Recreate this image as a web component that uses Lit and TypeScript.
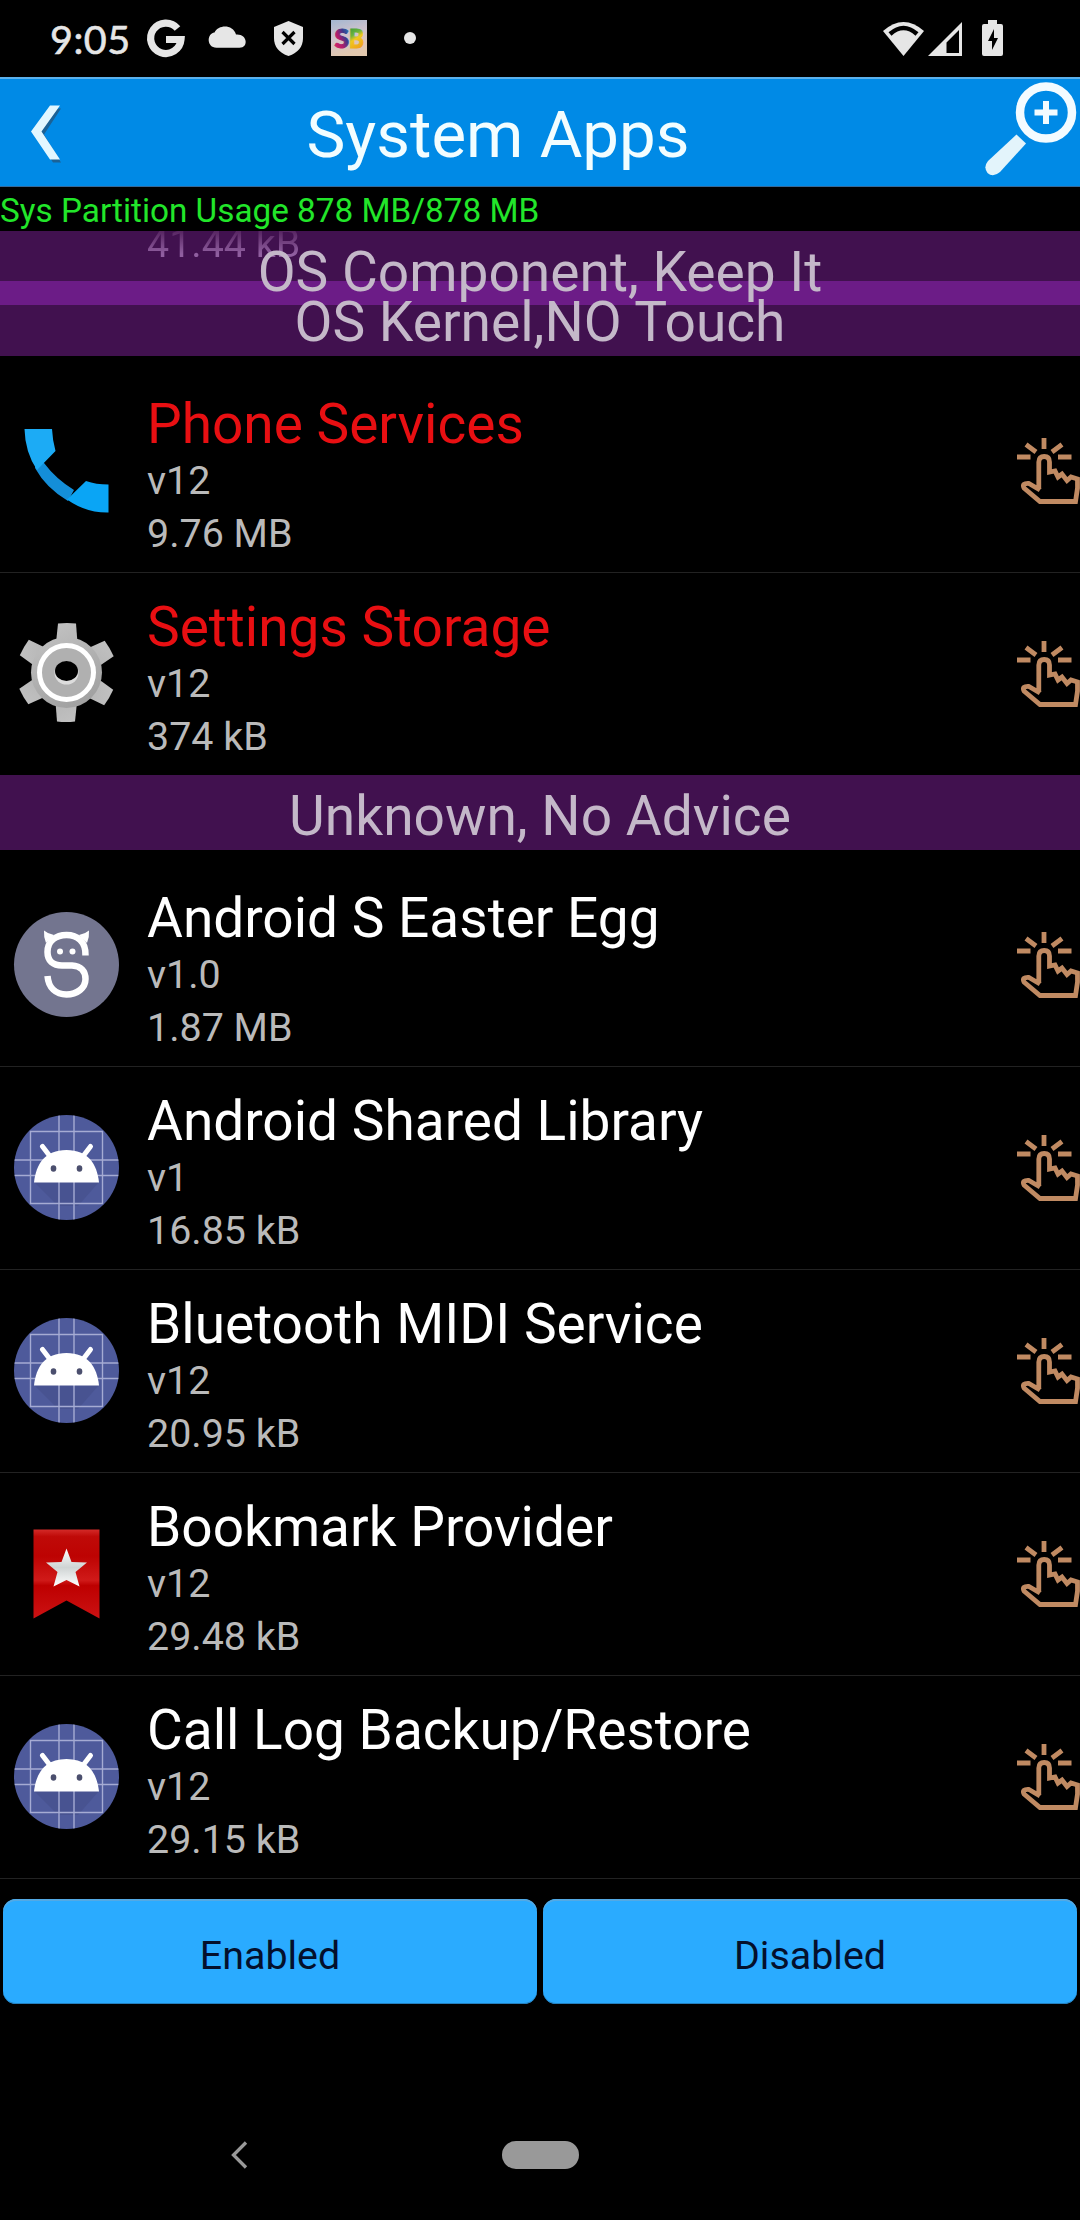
import { LitElement, html, css, svg } from "lit";
import { customElement, property } from "lit/decorators.js";

type IconName = "phone" | "gear" | "egg" | "droid" | "bookmark";

interface AppEntry {
  name: string;
  version: string;
  size: string;
  icon: IconName;
  core?: boolean;
  last?: boolean;
}

const SYSTEM_APPS: AppEntry[] = [
  { name: "Phone Services", version: "v12", size: "9.76 MB", icon: "phone", core: true },
  { name: "Settings Storage", version: "v12", size: "374 kB", icon: "gear", core: true, last: true },
];

const UNKNOWN_APPS: AppEntry[] = [
  { name: "Android S Easter Egg", version: "v1.0", size: "1.87 MB", icon: "egg" },
  { name: "Android Shared Library", version: "v1", size: "16.85 kB", icon: "droid" },
  { name: "Bluetooth MIDI Service", version: "v12", size: "20.95 kB", icon: "droid" },
  { name: "Bookmark Provider", version: "v12", size: "29.48 kB", icon: "bookmark" },
  { name: "Call Log Backup/Restore", version: "v12", size: "29.15 kB", icon: "droid" },
];

const tooth = (angle: number) => svg`
  <path transform="rotate(${angle} 66.5 67.5)" d="M58 18.500 Q67 17.500 76 18.500 L77.500 38 H56 Z"/>`;

const icons: Record<IconName, () => unknown> = {
  phone: () => svg`
    <path fill="#148ed8" d="M35 59 L44 61 Q56 77 74 88 L68 99 Q46 86 35 66Z"/>
    <path fill="#1cabf5" d="M24.500 27 H52 Q52.500 38 55.500 49 L37 68 Q25 50 24.500 27Z"/>
    <path fill="#0aa5f5" d="M67 97.500 L86 79 Q96 82.500 108.500 82.500 V110.500 Q86 111 67 97.500Z"/>`,
  gear: () => svg`
    <defs>
      <linearGradient id="metal" gradientUnits="userSpaceOnUse" x1="40" y1="18" x2="90" y2="117">
        <stop offset="0" stop-color="#c4c4c4"/><stop offset="1" stop-color="#999"/>
      </linearGradient>
    </defs>
    <g fill="url(#metal)">
      ${[0, 60, 120, 180, 240, 300].map(tooth)}
      <circle cx="66.500" cy="67.500" r="35.500"/>
    </g>
    <circle cx="66.500" cy="67.500" r="27" fill="#b0b0b0" stroke="#fff" stroke-width="5"/>
    <ellipse cx="66.500" cy="68" rx="12" ry="11.500" fill="#ddd"/>
    <ellipse cx="66.500" cy="66" rx="11.500" ry="10" fill="#000"/>`,
  egg: () => svg`
    <circle cx="66.500" cy="68.500" r="52.500" fill="#73758f"/>
    <g fill="none" stroke="#fff" stroke-width="6.500">
      <path d="M85.500 59.500 C86 45 77 39 66.500 39 C56 39 47.500 45 47.500 56 C47.500 65 53 69.500 62 69.500 H72 C81 70 85.500 75 85.500 83 C85.500 92 77 98.500 66.500 98.500 C56 98.500 48.500 92 47.500 80"/>
    </g>
    <path d="M44 34.500 Q48 38 54 39 L46 47 Q43.500 41 44 34.500Z M89 34.500 Q85 38 79 39 L87 47 Q89.500 41 89 34.500Z" fill="#fff"/>
    <circle cx="60" cy="55.500" r="3" fill="#fff"/><circle cx="72.500" cy="55.500" r="3" fill="#fff"/>`,
  droid: () => svg`
    <defs><clipPath id="disc"><circle cx="66.500" cy="68.500" r="52.500"/></clipPath></defs>
    <g clip-path="url(#disc)">
      <rect width="133" height="133" fill="#4e5a9b"/>
      <path d="M34 83 L58 107 H78 L99 83Z" fill="#485391"/>
      <path d="M59 10V125 M74 10V125 M10 61H123 M10 76.500H123 M30.500 32.500H102.500V104.500H30.500Z"
        fill="none" stroke="#a5abd3" stroke-width="1.400"/>
    </g>
    <path d="M34 83.500 C36 65 45 51 66.500 51 C88 51 97 65 99 83.500Z" fill="#fff"/>
    <path d="M42.500 47.500 L49 56 M90.500 47.500 L84 56" stroke="#fff" stroke-width="5" stroke-linecap="round"/>
    <ellipse cx="53.500" cy="69.500" rx="2.800" ry="3.300" fill="#4b4f6e"/>
    <ellipse cx="79.500" cy="69.500" rx="2.800" ry="3.300" fill="#4b4f6e"/>`,
  bookmark: () => svg`
    <defs>
      <linearGradient id="ribbon" x1="0" y1="0" x2="0" y2="1">
        <stop offset="0" stop-color="#d42a28"/><stop offset=".08" stop-color="#bf0a08"/>
        <stop offset=".3" stop-color="#bd0302"/><stop offset=".57" stop-color="#d01a19"/>
        <stop offset=".63" stop-color="#bd0000"/><stop offset="1" stop-color="#cc1213"/>
      </linearGradient>
      <linearGradient id="silver" x1="0" y1="0" x2="0" y2="1">
        <stop offset="0" stop-color="#fff"/><stop offset=".5" stop-color="#cfd4d4"/>
        <stop offset="1" stop-color="#fff"/>
      </linearGradient>
    </defs>
    <g transform="translate(0 2)">
      <path d="M33.500 22.500 H99.500 V111.500 L66.500 93.500 L33.500 111.500Z" fill="url(#ribbon)"/>
      <path d="M66.500 41.500 L71.500 55 L87 55.500 L75.500 65 L79.500 79.500 L66.500 73 L53.500 79.500 L57.500 65 L46 55.500 L61.500 55Z" fill="url(#silver)"/>
    </g>`,
};

@customElement("app-row")
export class AppRow extends LitElement {
  @property({ attribute: false }) entry!: AppEntry;

  static styles = css`
    :host { display: block; }
    .row { display: flex; align-items: flex-start; height: 202px; border-bottom: 1px solid #222; }
    .last { border-bottom: 0; }
    .icon { width: 133px; height: 133px; flex: none; margin-top: 32px; }
    .info { flex: 1; padding: 22px 0 0 14px; }
    .name { font-size: 55px; line-height: 64px; height: 62px; color: #fff; white-space: nowrap; }
    .core { color: #e80f12; }
    .meta { font-size: 39.4px; line-height: 53px; color: #bababa; }
    .tap { width: 66px; height: 76px; flex: none; margin-top: 61px; }
  `;

  render() {
    const e = this.entry;
    return html`
      <div class="row ${e.last ? "last" : ""}">
        <svg class="icon" viewBox="0 0 133 133">${icons[e.icon]()}</svg>
        <div class="info">
          <div class="name ${e.core ? "core" : ""}">${e.name}</div>
          <div class="meta">${e.version}</div>
          <div class="meta">${e.size}</div>
        </div>
        <svg class="tap" viewBox="0 0 66 76" fill="none" stroke="#c08a62" stroke-width="4.800">
          <path d="M30 7V18 M12 13.500L22 21 M48 13.500L38 21 M3 26H16.500 M44 26H57.500"/>
          <path d="M26 59 L24.800 58 V31 Q25 25.500 30.200 25.500 Q35.500 25.500 35.500 31 V41 L41 40 L44 46 L48 43 L53 49.500 L57 46 L63.500 48 V57 L61.500 70.500 H26 L10 57 Q7.500 52 15 52.500 L26 59"/>
        </svg>
      </div>`;
  }
}

@customElement("app-root")
export class AppRoot extends LitElement {
  static styles = css`
    :host {
      display: flex;
      flex-direction: column;
      width: 1080px;
      height: 2220px;
      overflow: hidden;
      background: #000;
      font-family: Roboto, "Liberation Sans", sans-serif;
    }
    .status { height: 77px; flex: none; display: flex; align-items: center; box-sizing: border-box; padding: 0 75px 0 50px; color: #e6e6e6; }
    .clock { width: 90px; font: 400 39.5px/77px Lato, sans-serif; letter-spacing: 0.5px; white-space: nowrap; -webkit-text-stroke: 0.6px #e6e6e6; }
    .glyph { display: block; height: 77px; flex: none; }
    .logo { font: 900 26px Lato, sans-serif; }
    .spacer { flex: 1; }
    .header {
      height: 110px; flex: none; box-sizing: border-box;
      display: grid; grid-template-columns: 100px 1fr 100px; grid-template-rows: 107px;
      background: #008ae6; border-top: 2px solid #5cb1ec; border-bottom: 1px solid #34699a;
    }
    .header svg { display: block; }
    .title { margin: 0; height: 107px; font-size: 65.400px; line-height: 111px; font-weight: 400; color: #f2fdff; text-align: center; padding-right: 84px; white-space: nowrap; }
    .usage { height: 44px; flex: none; font-size: 33.300px; line-height: 47px; color: #22e62a; white-space: nowrap; }
    .list { flex: none; height: 1668px; overflow: hidden; }
    .band { height: 75px; box-sizing: border-box; background: #41114f; color: #c4b8c9; font-size: 55.100px; line-height: 82px; text-align: center; white-space: nowrap; }
    .stack { position: relative; height: 125px; overflow: hidden; }
    .pinned { position: absolute; left: 0; right: 0; top: 0; }
    .next { position: absolute; left: 0; right: 0; top: 50px; }
    .overlap { position: absolute; left: 0; right: 0; top: 50px; height: 24px; background: #6c1c87; }
    .clear { background: transparent; }
    .leaving {
      position: absolute; left: 147px; top: -14px; font-size: 39.400px; line-height: 53px;
      color: transparent; background: linear-gradient(#54225f 25%, #905fa0 70%); -webkit-background-clip: text; background-clip: text;
    }
    .group { padding-top: 14px; }
    .buttons { flex: none; display: flex; gap: 6px; padding: 0 3px; height: 105px; }
    .button { flex: 1; border: 0; padding: 8px 0 0; border-radius: 13px; background: #2aabff; color: #04102c; font: 400 39.400px/53px Roboto, sans-serif; box-shadow: inset 0 2px #53a9e4, inset 0 -1px #247fbd; }
    .nav { flex: 1; display: grid; grid-template-columns: 502px 77px 1fr; padding-top: 137px; align-items: start; }
    .back { display: block; justify-self: start; margin-left: 228px; }
    .home { height: 28px; border-radius: 14px; background: #999; }
  `;

  private statusBar() {
    return html`
      <div class="status">
        <div class="clock">9:05</div>
        <svg class="glyph" width="280" viewBox="140 0 280 77" fill="#e6e6e6">
          <defs>
            <linearGradient id="sky" x1="0" y1="0" x2="0.300" y2="1">
              <stop offset="0" stop-color="#a3b6d0"/><stop offset=".5" stop-color="#cfc3cd"/><stop offset="1" stop-color="#e2c8ae"/>
            </linearGradient>
            <linearGradient id="cool" x1="1" y1="0" x2="0" y2="1">
              <stop offset="0" stop-color="#1f8fc0"/><stop offset=".35" stop-color="#3a3a8c"/>
              <stop offset=".6" stop-color="#b01c6c"/><stop offset="1" stop-color="#dd2a6a"/>
            </linearGradient>
            <linearGradient id="warm" x1="0" y1="0" x2="0.300" y2="1">
              <stop offset="0" stop-color="#1d8a3c"/><stop offset=".45" stop-color="#6db53a"/>
              <stop offset=".6" stop-color="#f0c81e"/><stop offset="1" stop-color="#ef9a1c"/>
            </linearGradient>
          </defs>
          <path d="M177.500 28.500 A15.200 15.200 0 1 0 181 39.500 H166" fill="none" stroke="#e6e6e6" stroke-width="7.200"/>
          <path d="M216.500 47.700 C206.500 47.700 206.500 33.500 214.500 32.500 C219 24 233 24.500 236 34.500 C247.500 33.500 249 47.700 239.500 47.700Z"/>
          <path d="M288.500 21 L303 27 V38 Q303 51 288.500 56 Q274 51 274 38 V27Z"/>
          <path d="M282.500 32 L294.500 44 M294.500 32 L282.500 44" stroke="#000" stroke-width="3.200"/>
          <rect x="331" y="20" width="36" height="36" fill="url(#sky)"/>
          <text class="logo" x="334.500" y="48" textLength="14.500" lengthAdjust="spacingAndGlyphs" fill="url(#cool)" stroke="url(#cool)">S</text>
          <text class="logo" x="349" y="48" textLength="15" lengthAdjust="spacingAndGlyphs" fill="url(#warm)" stroke="url(#warm)">B</text>
          <circle cx="410" cy="38" r="6"/>
        </svg>
        <div class="spacer"></div>
        <svg class="glyph" width="125" viewBox="880 0 125 77" fill="#e6e6e6">
          <path d="M883 31 Q903.500 13 924 31 L903.500 56Z"/>
          <path d="M890 34 Q903.500 22 917 34" fill="none" stroke="#000" stroke-width="4.500"/>
          <path fill-rule="evenodd" d="M962 22V56H928Z M959 30 L946.500 42.500V53H959Z"/>
          <path d="M988 20h9v4h4q2 0 2 2v28q0 2-2 2h-17q-2 0-2-2V26q0-2 2-2h4z"/>
          <path d="M994 29L988 41H992V50L998 38H994Z" fill="#000"/>
        </svg>
      </div>`;
  }

  render() {
    return html`
      ${this.statusBar()}
      <div class="header">
        <svg width="100" height="107" viewBox="0 79 100 107">
          <path d="M52 107H60L43 133L60 161H52L34 133Z" fill="#1b6296" transform="translate(1 1.500)"/>
          <path d="M50 105.500H60L41.500 131.500L60 159.500H50L31 131.500Z" fill="#e2f7ff"/>
        </svg>
        <h1 class="title">System Apps</h1>
        <svg width="100" height="107" viewBox="980 79 100 107">
          <path d="M1016.500 134.500L1026 143.500L1000 172Q993 178 987.500 173Q983 167 988 161Z" fill="#e3f4fb"/>
          <circle cx="1046" cy="112.500" r="26" fill="none" stroke="#f3fbff" stroke-width="8.500"/>
          <path d="M1046 101V124M1034.500 112.500H1057.500" stroke="#f3fbff" stroke-width="6"/>
        </svg>
      </div>
      <div class="usage">Sys Partition Usage 878 MB/878 MB</div>
      <div class="list">
        <div class="stack">
          <div class="band pinned"></div>
          <div class="band next"></div>
          <div class="overlap"></div>
          <div class="leaving">41.44 kB</div>
          <div class="band clear pinned">OS Component, Keep It</div>
          <div class="band clear next">OS Kernel,NO Touch</div>
        </div>
        <div class="group">${SYSTEM_APPS.map((e) => html`<app-row .entry=${e}></app-row>`)}</div>
        <div class="band">Unknown, No Advice</div>
        <div class="group">${UNKNOWN_APPS.map((e) => html`<app-row .entry=${e}></app-row>`)}</div>
      </div>
      <div class="buttons">
        <button class="button">Enabled</button>
        <button class="button">Disabled</button>
      </div>
      <div class="nav">
        <svg class="back" width="24" height="28" viewBox="228 0 24 28"><path d="M246 1.500L233.500 14L246 26.500" fill="none" stroke="#999" stroke-width="3.300"/></svg>
        <div class="home"></div>
      </div>`;
  }
}
